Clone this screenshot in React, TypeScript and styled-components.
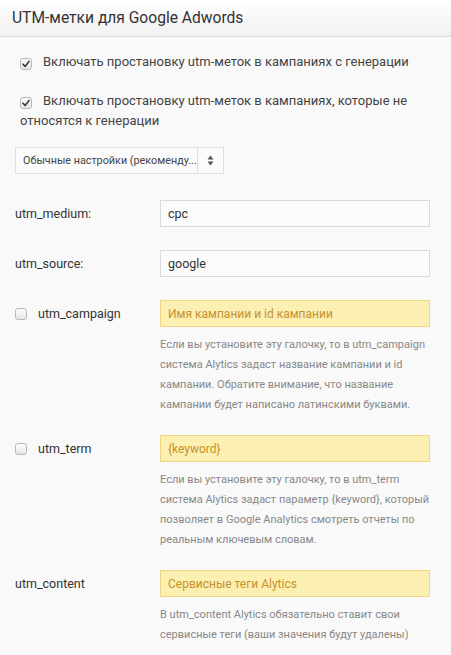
import React from 'react';
import styled, { createGlobalStyle } from 'styled-components';

const GlobalStyle = createGlobalStyle`
    html, body {
        margin: 0;
        padding: 0;
        background: #f9f9f9;
    }

    body {
        font-family: Roboto, "Liberation Sans", sans-serif;
        color: #333;
    }
`;

const Panel = styled.div`
    width: 451px;
    min-height: 655px;
    background: #f9f9f9;
`;

const Header = styled.header`
    height: 36px;
    padding: 0 12px;
    display: flex;
    align-items: center;

    background: linear-gradient(to bottom, #ffffff 0%, #f1f1f1 100%);
    border-bottom: 1px solid #dcdcdc;

    font-size: 15.6px;
    color: #333;
`;

const Body = styled.div`
    padding: 15px 21px 10px 15px;
`;

const OptionText = styled.p`
    margin: 0 0 19px;
    padding-left: 5px;

    font-size: 13px;
    line-height: 20px;
    color: #444;
`;

const Box = styled.span`
    display: inline-flex;
    align-items: center;
    justify-content: center;
    box-sizing: border-box;
    vertical-align: -2px;

    width: 12px;
    height: 12px;
    margin-right: 11px;

    border: 1px solid #b9b9b9;
    border-radius: 3px;
    background: linear-gradient(to bottom, #fdfdfd 0%, #e6e6e6 100%);
`;

const SelectBox = styled.div`
    display: flex;
    box-sizing: border-box;

    width: 209px;
    height: 27px;
    margin-top: -3px;

    border: 1px solid #dedede;
    background: #fbfbfb;
`;

const SelectValue = styled.div`
    flex: 1;
    min-width: 0;
    padding: 0 0 0 7px;
    display: flex;
    align-items: center;

    font-size: 10.8px;
    color: #444;
    white-space: nowrap;
`;

const SelectArrows = styled.div`
    width: 25px;
    display: flex;
    align-items: center;
    justify-content: center;
    border-left: 1px solid #dedede;
`;

const Fields = styled.div`
    display: grid;
    grid-template-columns: 145px 270px;
    margin-top: 26px;
`;

const FieldLabel = styled.label`
    display: flex;
    align-items: center;
    height: 27px;

    font-size: 12.5px;
    color: #333;
`;

const Field = styled.div<{ $warn?: boolean }>`
    box-sizing: border-box;
    height: 27px;
    padding: 0 7px;
    display: flex;
    align-items: center;

    border: 1px solid ${props => (props.$warn ? '#f2d685' : '#dadada')};
    background: ${props => (props.$warn ? '#fcefb2' : '#fbfbfb')};

    font-size: ${props => (props.$warn ? '12px' : '12.5px')};
    color: ${props => (props.$warn ? '#c6922c' : '#333')};
`;

const Spacer = styled.div<{ $size: number }>`
    grid-column: 1 / -1;
    height: ${props => props.$size}px;
`;

const Help = styled.div`
    grid-column: 2;
    margin-top: 8px;

    font-size: 11px;
    line-height: 20px;
    color: #888;
`;

const CheckMark: React.FC = () => (
    <svg width="8" height="8" viewBox="0 0 8 8">
        <path d="M1 4.2 L3.1 6.4 L7 1.4" fill="none" stroke="#3a3a3a" strokeWidth="1.6" strokeLinejoin="round" strokeLinecap="round" />
    </svg>
);

const Checkbox: React.FC<{ checked?: boolean }> = ({ checked }) => (
    <Box>{checked && <CheckMark />}</Box>
);

type FieldData = {
    label: string;
    value: string;
    checkbox?: boolean;
    warn?: boolean;
    help?: string;
};

const fields: FieldData[] = [
    { label: 'utm_medium:', value: 'cpc' },
    { label: 'utm_source:', value: 'google' },
    {
        label: 'utm_campaign',
        value: 'Имя кампании и id кампании',
        checkbox: true,
        warn: true,
        help: 'Если вы установите эту галочку, то в utm_campaign система Alytics задаст название кампании и id кампании. Обратите внимание, что название кампании будет написано латинскими буквами.',
    },
    {
        label: 'utm_term',
        value: '{keyword}',
        checkbox: true,
        warn: true,
        help: 'Если вы установите эту галочку, то в utm_term система Alytics задаст параметр {keyword}, который позволяет в Google Analytics смотреть отчеты по реальным ключевым словам.',
    },
    {
        label: 'utm_content',
        value: 'Сервисные теги Alytics',
        warn: true,
        help: 'В utm_content Alytics обязательно ставит свои сервисные теги (ваши значения будут удалены)',
    },
];

const App: React.FC = () => {
    return (
        <Panel>
            <GlobalStyle />
            <Header>UTM-метки для Google Adwords</Header>
            <Body>
                <OptionText>
                    <Checkbox checked />
                    Включать простановку utm-меток в кампаниях с генерации
                </OptionText>
                <OptionText>
                    <Checkbox checked />
                    Включать простановку utm-меток в кампаниях, которые не относятся к генерации
                </OptionText>
                <SelectBox>
                    <SelectValue>Обычные настройки (рекоменду...</SelectValue>
                    <SelectArrows>
                        <svg width="7" height="11" viewBox="0 0 7 11">
                            <path d="M3.5 0.5 L6.5 4.5 L0.5 4.5 Z" fill="#555" />
                            <path d="M3.5 10.5 L6.5 6.5 L0.5 6.5 Z" fill="#555" />
                        </svg>
                    </SelectArrows>
                </SelectBox>
                <Fields>
                    {fields.map((field, i) => (
                        <React.Fragment key={`field-${field.label}`}>
                            <FieldLabel>
                                {field.checkbox && <Checkbox />}
                                {field.label}
                            </FieldLabel>
                            <Field $warn={field.warn}>{field.value}</Field>
                            {field.help && <Help>{field.help}</Help>}
                            {i < fields.length - 1 && <Spacer $size={field.help ? 20 : 23} />}
                        </React.Fragment>
                    ))}
                </Fields>
            </Body>
        </Panel>
    );
};

export default App;
